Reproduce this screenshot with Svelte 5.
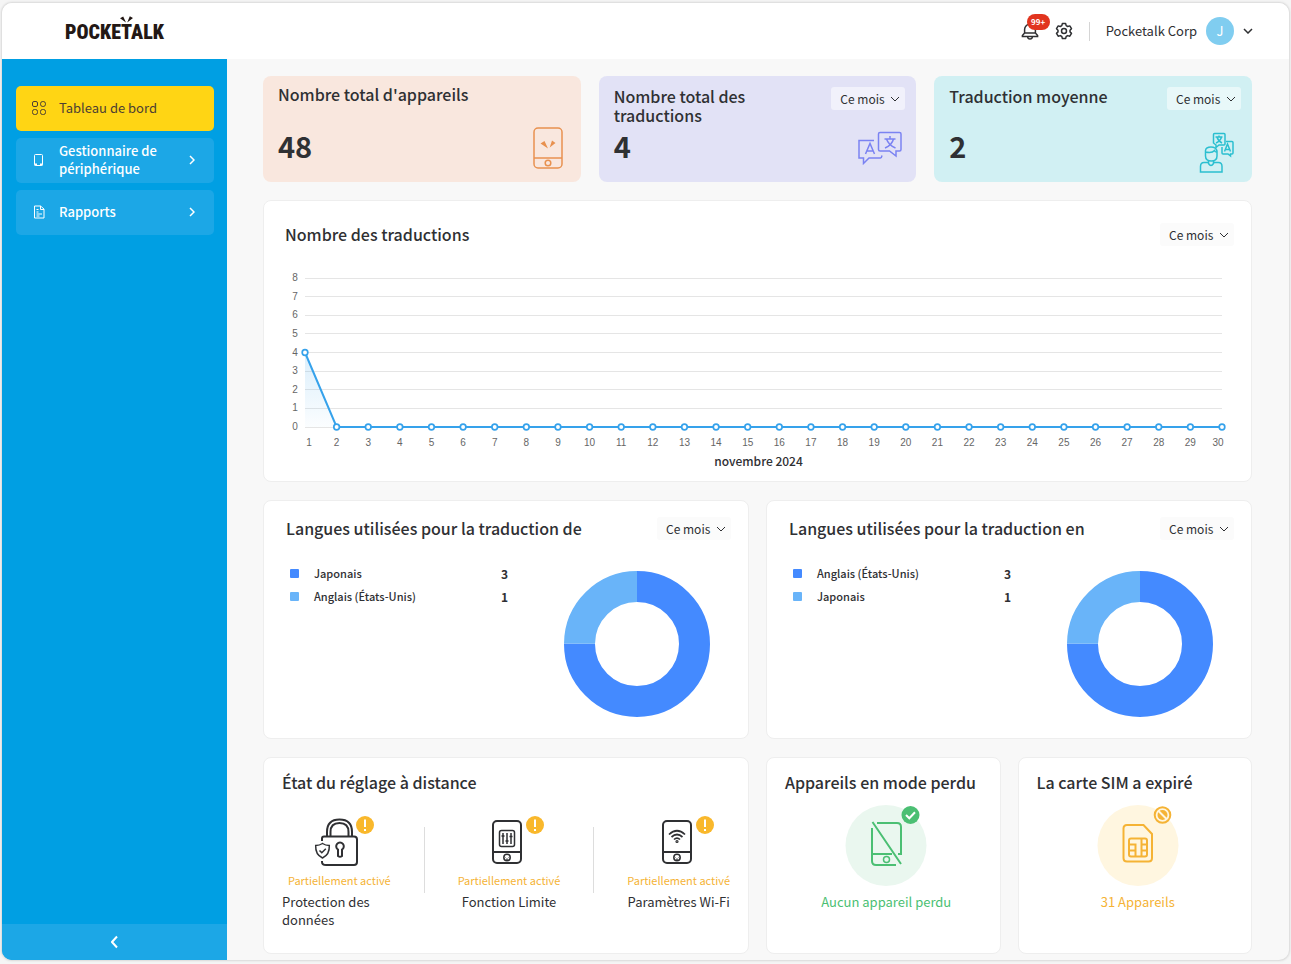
<script>
    const days = Array.from({ length: 30 }, (_, i) => i + 1);
    const counts = days.map((day) => (day === 1 ? 4 : 0));
    const ticks = [8, 7, 6, 5, 4, 3, 2, 1, 0];

    const languageCards = [
        {
            id: "from",
            title: "Langues utilisées pour la traduction de",
            rows: [
                { name: "Japonais", count: 3, color: "#448aff" },
                { name: "Anglais (États-Unis)", count: 1, color: "#69b4f9" },
            ],
        },
        {
            id: "to",
            title: "Langues utilisées pour la traduction en",
            rows: [
                { name: "Anglais (États-Unis)", count: 3, color: "#448aff" },
                { name: "Japonais", count: 1, color: "#69b4f9" },
            ],
        },
    ];

    const settings = [
        { icon: "lock", name: "Protection des données" },
        { icon: "limit", name: "Fonction Limite" },
        { icon: "wifi", name: "Paramètres Wi-Fi" },
    ];

    // The chart follows the width of its card
    let chartWidth = $state(947);
    const left = 20;
    const top = 10;
    const plotHeight = 149;
    let right = $derived(chartWidth - 10);

    const y = (value) => top + plotHeight - (value * plotHeight) / 8;
    let points = $derived(
        counts.map((count, i) => ({
            x: left + (i * (right - left)) / (days.length - 1),
            y: y(count),
        })),
    );
    let line = $derived(points.map((p) => `${p.x},${p.y}`).join(" "));

    // First and last labels are pulled inside the plot
    function labelX(i) {
        if (i === 0) return points[i].x + 4;
        if (i === days.length - 1) return points[i].x - 4;
        return points[i].x;
    }

    function slices(rows) {
        const length = 2 * Math.PI * 57.5;
        const total = rows.reduce((sum, row) => sum + row.count, 0);
        let offset = 0;
        return rows.map((row) => {
            const part = (row.count / total) * length;
            const slice = { color: row.color, dash: `${part} ${length - part}`, offset: -offset };
            offset += part;
            return slice;
        });
    }
</script>

{#snippet chevron()}
    <svg class="chevron" width="10" height="6" viewBox="0 0 10 6" aria-hidden="true">
        <path d="M1 1l4 4 4-4" />
    </svg>
{/snippet}

{#snippet period(id, label)}
    <span class="period">
        <select {id} aria-label={label}>
            <option>Ce mois</option>
        </select>
        {@render chevron()}
    </span>
{/snippet}

{#snippet phone()}
    <rect x="19" y="5" width="28" height="42" rx="4" />
    <path d="M19 36h28" />
    <circle cx="33" cy="41.500" r="3.200" stroke-width="1.500" />
    <path d="M31.500 41.200v.4M34.500 41.200v.4M32 43q1 .6 2 0" stroke-width="1" />
{/snippet}

<div class="window">
    <header class="topbar">
        <a class="logo" href="#home" aria-label="POCKETALK">
            <span>POCKETALK</span>
            <svg width="13" height="7" viewBox="0 0 13 7" aria-hidden="true">
                <path d="M0 2.200L3.200.4 6 6.600zM9.800.200L13 2 7.200 6.600z" />
            </svg>
        </a>
        <div class="tools">
            <button class="bell" aria-label="Notifications">
                <svg width="18" height="18" viewBox="0 0 18 18" aria-hidden="true">
                    <path d="M3.600 11V7.500a5.400 5.400 0 0 1 10.800 0V11l2.200 2.600v1H1.400v-1zM3.600 11h10.800M6.600 14.800q.2 2.200 2.400 2.200t2.400-2.200" />
                </svg>
                <span class="count">99+</span>
            </button>
            <button aria-label="Paramètres">
                <svg width="18" height="18" viewBox="0 0 18 18" aria-hidden="true">
                    <path d="M7.400 1.500h3.200l.6 2.100 1.500.9 2.100-.6 1.700 2.800-1.500 1.500v1.700l1.500 1.500-1.700 2.800-2.100-.6-1.500.9-.6 2.100H7.400l-.6-2.100-1.500-.9-2.100.6-1.700-2.800L3 9.900V8.200L1.500 6.700l1.700-2.800 2.100.6 1.500-.9z" stroke-linejoin="round" />
                    <circle cx="9" cy="9" r="2.500" />
                </svg>
            </button>
            <span class="separator"></span>
            <button class="account">
                <span>Pocketalk Corp</span>
                <span class="avatar">J</span>
                {@render chevron()}
            </button>
        </div>
    </header>

    <div class="body">
        <aside>
            <nav>
                <a class="active" href="#dashboard">
                    <svg width="16" height="16" viewBox="0 0 16 16" aria-hidden="true">
                        <rect x="1.500" y="1.500" width="5" height="5" rx="1.500" />
                        <rect x="9.500" y="1.500" width="5" height="5" rx="2.300" />
                        <rect x="1.500" y="9.500" width="5" height="5" rx="2" />
                        <rect x="9.500" y="9.500" width="5" height="5" rx="2" />
                    </svg>
                    <span>Tableau de bord</span>
                </a>
                <a href="#devices">
                    <svg width="16" height="16" viewBox="0 0 16 16" aria-hidden="true">
                        <rect x="3.500" y="2.500" width="8" height="11" rx="1" />
                        <path d="M3.500 12.500H6M9 12.500h2.500" stroke-width="2" />
                    </svg>
                    <span>Gestionnaire de périphérique</span>
                    <svg class="arrow" width="6" height="10" viewBox="0 0 6 10" aria-hidden="true">
                        <path d="M1 1l4 4-4 4" />
                    </svg>
                </a>
                <a href="#reports">
                    <svg width="16" height="16" viewBox="0 0 16 16" aria-hidden="true">
                        <path d="M3.500 2h6L13 5v9H3.500zM9.500 2v3.500H13M5.500 5.500h2M5.500 8h2M5.500 10h5.500M5.500 12h3" />
                    </svg>
                    <span>Rapports</span>
                    <svg class="arrow" width="6" height="10" viewBox="0 0 6 10" aria-hidden="true">
                        <path d="M1 1l4 4-4 4" />
                    </svg>
                </a>
            </nav>
            <button class="collapse" aria-label="Réduire le menu">
                <svg width="8" height="14" viewBox="0 0 8 14" aria-hidden="true">
                    <path d="M6 1.500L1 7l5 5.500" />
                </svg>
            </button>
        </aside>

        <main>
            <div class="stats">
                <section class="stat devices">
                    <h2>Nombre total d'appareils</h2>
                    <div class="figure">
                        <strong>48</strong>
                        <svg width="30" height="42" viewBox="0 0 30 42" aria-hidden="true">
                            <rect x="1" y="1" width="28" height="40" rx="4" />
                            <path d="M1 31h28" />
                            <circle cx="15" cy="36" r="2.800" />
                            <path class="solid" d="M7.500 16.500l4-2.500L15 21.500zM19 13.500l3.500 2.500-5.800 4.500z" />
                        </svg>
                    </div>
                </section>
                <section class="stat translations">
                    <div class="head">
                        <h2>Nombre total des traductions</h2>
                        {@render period("total", "Période du total")}
                    </div>
                    <div class="figure">
                        <strong>4</strong>
                        <svg width="44" height="42" viewBox="0 0 44 42" aria-hidden="true">
                            <path d="M22 5.500h19.500q1.500 0 1.500 1.500v15.500q0 1.500-1.500 1.500H38v5L31.500 24H22q-1.500 0-1.500-1.500V7q0-1.500 1.500-1.500z" />
                            <path d="M16 13.500H1V31h4.500v5.500L11 31h11.500q1 0 1.500-2.500" />
                            <path d="M7.500 27L12 16.500 16.500 27M9 24h6" />
                            <path d="M26.500 12h11M32 9v3M35.500 12q-1.500 6-8.500 9M28.500 12q2 6 9 9" />
                        </svg>
                    </div>
                </section>
                <section class="stat average">
                    <div class="head">
                        <h2>Traduction moyenne</h2>
                        {@render period("average", "Période de la moyenne")}
                    </div>
                    <div class="figure">
                        <strong>2</strong>
                        <svg width="34" height="42" viewBox="0 0 34 42" aria-hidden="true">
                            <path d="M16 18l-2.500-2V7.500q0-1 1-1h9.500q1 0 1 1V17q0 1-1 1h-5L16 20.500z" />
                            <path d="M26 14.500h6q1 0 1 1V26q0 1-1 1h-1.500v2L28 27h-5q-1 0-1-1v-6" />
                            <path d="M15.500 10h7M19 8.500V10M21.500 10q-1 4-5.500 6M17 10q1 4 5 6M24.500 24.500l3-7.500 3 7.500M25.500 22.500h4" />
                            <path d="M5.500 25q6.500 1.500 9-1.500 1 2 2.500 1.500M5.500 25v-1.500q.5-3.500 5.500-3.500t6 4V29q0 5-5.700 5T5.500 29z" />
                            <path d="M8.500 34v2.500q2.500 4 5 0V34M8.500 35.500H4q-3.500 0-3.500 4v5.500h21.500v-5.500q0-4-3.500-4h-5" />
                        </svg>
                    </div>
                </section>
            </div>

            <section class="panel">
                <div class="head chart-head">
                    <h2>Nombre des traductions</h2>
                    {@render period("chart", "Période du graphique")}
                </div>
                <figure bind:clientWidth={chartWidth}>
                    <svg width={chartWidth} height="183" role="img" aria-label="Nombre des traductions par jour">
                        <defs>
                            <linearGradient id="fade" x1="0" y1="0" x2="0" y2="1">
                                <stop offset="0" stop-color="#36a2eb" stop-opacity="0.180" />
                                <stop offset="1" stop-color="#36a2eb" stop-opacity="0.020" />
                            </linearGradient>
                        </defs>
                        {#each ticks as tick}
                            <line x1={left} x2={right} y1={Math.floor(y(tick)) + 0.5} y2={Math.floor(y(tick)) + 0.5} />
                            <text x="10" y={y(tick) + 3}>{tick}</text>
                        {/each}
                        <polygon points="{left},{y(0)} {line} {right},{y(0)}" fill="url(#fade)" />
                        <polyline points={line} />
                        {#each points as point, i}
                            <circle cx={point.x} cy={point.y} r="2.800" />
                            <text x={labelX(i)} y="178">{days[i]}</text>
                        {/each}
                    </svg>
                    <figcaption>novembre 2024</figcaption>
                </figure>
            </section>

            <div class="halves">
                {#each languageCards as card}
                    <section class="panel">
                        <div class="head">
                            <h2>{card.title}</h2>
                            {@render period(card.id, "Période : " + card.title)}
                        </div>
                        <div class="languages">
                            <ul>
                                {#each card.rows as row}
                                    <li>
                                        <span class="swatch" style="background: {row.color}"></span>
                                        <span class="name">{row.name}</span>
                                        <b>{row.count}</b>
                                    </li>
                                {/each}
                            </ul>
                            <svg width="146" height="146" viewBox="0 0 146 146" aria-hidden="true">
                                {#each slices(card.rows) as slice}
                                    <circle
                                        cx="73"
                                        cy="73"
                                        r="57.500"
                                        stroke={slice.color}
                                        stroke-dasharray={slice.dash}
                                        stroke-dashoffset={slice.offset}
                                        transform="rotate(-90 73 73)"
                                    />
                                {/each}
                            </svg>
                        </div>
                    </section>
                {/each}
            </div>

            <div class="halves">
                <section class="panel status">
                    <h2>État du réglage à distance</h2>
                    <div class="settings">
                        {#each settings as setting}
                            <div class="setting">
                                <svg width="70" height="52" viewBox="0 0 70 52" aria-hidden="true">
                                    {#if setting.icon === "lock"}
                                        <path d="M18 25v-2.500q0-2 2-2h30q3 0 3 3V46q0 3-3 3H22q-4 0-4-3v-1" />
                                        <path d="M23 20.500V16q0-12.500 12.500-12.500T48 16v4.500M26.500 20.500V16q0-9 9-9t9 9v4.500" />
                                        <path d="M34 40v-6.500a3.800 3.800 0 1 1 4 0V40q-2 1.500-4 0z" />
                                        <path d="M18.500 27.500q3 2 6.800 2 .5 9-6.800 12.500-7.300-3.500-6.800-12.500 3.800 0 6.800-2zM15.500 34.500l2.300 2.300 4-4" stroke-width="1.500" />
                                    {:else}
                                        {@render phone()}
                                        {#if setting.icon === "limit"}
                                            <rect x="25.500" y="14.500" width="15" height="16" rx="2" stroke-width="1.500" />
                                            <path d="M29 17v11M33 17v11M37 17v11M27.500 20h3M31.500 25h3M35.500 20.500h3" stroke-width="1.500" />
                                        {:else}
                                            <path d="M25 18.500q8-7.500 16 0M27.500 21q5.500-5 11 0M30 23.500q3-2.800 6 0" stroke-width="1.700" />
                                            <circle cx="33" cy="25.500" r=".6" />
                                        {/if}
                                    {/if}
                                    <circle class="badge" cx="61" cy="9" r="9" />
                                    <path class="mark" d="M61 3.500v7.500M61 13v2" />
                                </svg>
                                <span class="state">Partiellement activé</span>
                                <span>{setting.name}</span>
                            </div>
                        {/each}
                    </div>
                </section>

                <div class="pair">
                    <section class="panel status lost">
                        <h2>Appareils en mode perdu</h2>
                        <svg width="82" height="81" viewBox="0 0 82 81" aria-hidden="true">
                            <circle class="disc" cx="41" cy="40.500" r="40.500" />
                            <path d="M32 18h20q4 0 4 4v28M27 23v33q0 4 4 4h20M27 49h20M53 49h3M27.500 17L56 59" />
                            <circle cx="41.500" cy="54.500" r="3" stroke-width="1.500" />
                            <circle class="badge" cx="65.500" cy="10" r="9" />
                            <path class="mark" d="M61 10l3.300 3.300 5.700-6" />
                        </svg>
                        <a href="#lost">Aucun appareil perdu</a>
                    </section>
                    <section class="panel status sim">
                        <h2>La carte SIM a expiré</h2>
                        <svg width="82" height="81" viewBox="0 0 82 81" aria-hidden="true">
                            <circle class="disc" cx="41" cy="40.500" r="40.500" />
                            <path d="M30 20h16.500L55 29v24q0 3.500-3.500 3.500H30q-3.500 0-3.500-3.500V23.500Q26.500 20 30 20z" />
                            <path d="M34 33.500h14q2 0 2 2v14q0 2-2 2H34q-2 0-2-2v-14q0-2 2-2zM32 39.500h6.500v12M44.500 33.500v18M32 45.500h6.500M44.500 39.500H50M44.500 45.500H50" />
                            <circle class="ring" cx="65.500" cy="10" r="7.800" />
                            <circle class="dot" cx="65.500" cy="10" r="5" />
                            <path class="slash" d="M61.500 6l8 8" />
                        </svg>
                        <a href="#sim">31 Appareils</a>
                    </section>
                </div>
            </div>
        </main>
    </div>
</div>

<style>
    :global(body) {
        background: #f5f5f5;
    }

    .window {
        margin: 3px 2px 4px;
        background: #f8f8f8;
        border-radius: 10px;
        overflow: hidden;
        box-shadow: 0 0 2px 1px #d8d8d8;
        color: #2f3033;
        font: 13px/18px "Noto Sans CJK JP", "Noto Sans", sans-serif;
    }

    h2 {
        margin: 0;
        font-size: 16px;
        line-height: 19px;
        font-weight: 500;
    }

    button {
        padding: 0;
        border: 0;
        background: none;
        color: inherit;
        font: inherit;
        cursor: pointer;
    }

    a {
        color: inherit;
        text-decoration: none;
    }

    svg {
        display: block;
        flex: none;
        fill: none;
        stroke: currentColor;
    }

    /* Top bar */
    .topbar {
        display: flex;
        align-items: center;
        justify-content: space-between;
        height: 56px;
        padding: 0 36px 0 63px;
        background: #fff;
    }

    .logo {
        position: relative;
        padding-top: 2px;
        color: #231815;
        font: 900 20px/24px "Roboto Condensed", "Open Sans Condensed", Lato, sans-serif;
    }

    .logo svg {
        position: absolute;
        left: 55px;
        top: -2px;
        fill: currentColor;
        stroke: none;
    }

    .tools,
    .account {
        display: flex;
        align-items: center;
    }

    .tools {
        gap: 16px;
    }

    .tools > button > svg {
        stroke-width: 1.5;
    }

    .bell {
        position: relative;
    }

    .count {
        position: absolute;
        left: 6px;
        top: -8px;
        width: 23px;
        border-radius: 8px;
        background: #e1341e;
        color: #fff;
        font-size: 8px;
        line-height: 16px;
        font-weight: 700;
    }

    .separator {
        width: 1px;
        height: 19px;
        background: #d5d5d5;
    }

    .account {
        gap: 9px;
    }

    .avatar {
        width: 28px;
        border-radius: 50%;
        background: #80cdf0;
        color: #fff;
        line-height: 28px;
    }

    /* Sidebar */
    .body {
        display: flex;
    }

    aside {
        display: flex;
        flex: none;
        flex-direction: column;
        width: 225px;
        background: #009fe3;
        color: #fff;
    }

    nav {
        display: flex;
        flex: 1;
        flex-direction: column;
        gap: 7px;
        padding: 27px 13px 0 14px;
    }

    nav a {
        display: flex;
        align-items: center;
        gap: 12px;
        min-height: 43px;
        padding: 0 19px 2px 15px;
        border-radius: 5px;
        background: #1ca7e6;
        font-weight: 500;
    }

    nav a span {
        flex: 1;
    }

    nav .active {
        background: #ffd514;
        color: #4d3f33;
        font-weight: 400;
    }

    .arrow {
        stroke-width: 1.5;
    }

    .collapse {
        display: grid;
        place-items: center;
        height: 36px;
        background: #1ca7e6;
    }

    .collapse svg {
        stroke-width: 2;
    }

    /* Content */
    main {
        display: flex;
        flex: 1;
        flex-direction: column;
        gap: 18px;
        min-width: 0;
        padding: 17px 37px 6px 36px;
    }

    .stats {
        display: grid;
        grid-template-columns: repeat(3, 1fr);
        gap: 18px;
    }

    .stat {
        display: flex;
        flex-direction: column;
        justify-content: space-between;
        min-height: 106px;
        box-sizing: border-box;
        padding: 11px 11px 13px 15px;
        border-radius: 8px;
    }

    .head {
        display: flex;
        justify-content: space-between;
        align-items: center;
        gap: 16px;
    }

    .stat .head {
        align-items: flex-start;
    }

    .figure {
        display: flex;
        align-items: flex-start;
        justify-content: space-between;
        height: 42px;
    }

    .figure strong {
        font-size: 29px;
        line-height: 36px;
    }

    .figure svg {
        stroke-width: 1.5;
    }

    .devices {
        padding-top: 9px;
        background: #f9e7de;
    }

    .devices .figure {
        padding-right: 7px;
    }

    .devices svg {
        color: #e8914f;
    }

    .translations {
        background: #e2e2f6;
    }

    .translations .figure {
        padding-right: 3px;
    }

    .translations .figure svg {
        color: #7b83f2;
    }

    .average {
        background: #d1f0f3;
    }

    .average .figure {
        padding-right: 7px;
    }

    .average .figure svg {
        overflow: visible;
        color: #2bbfd0;
    }

    .solid {
        fill: currentColor;
        stroke: none;
    }

    /* Period picker, the chevron lies over the select */
    .period {
        position: relative;
        flex: none;
    }

    .period select {
        display: block;
        appearance: none;
        width: 74px;
        height: 23px;
        padding: 0 0 0 9px;
        border: 0;
        border-radius: 3px;
        background: #fbfbfb;
        color: inherit;
        font: inherit;
        font-size: 12px;
    }

    .stat .period select {
        background: rgba(255, 255, 255, 0.5);
    }

    .period .chevron {
        position: absolute;
        right: 5px;
        top: 9px;
        pointer-events: none;
    }

    .panel {
        box-sizing: border-box;
        border: 1px solid #eee;
        border-radius: 8px;
        background: #fff;
    }

    .panel > .head {
        padding: 16px 17px 0 22px;
    }

    .panel > .chart-head {
        padding: 22px 17px 0 21px;
    }

    figure {
        margin: 22px 19px 10px 21px;
    }

    figure line {
        stroke: #e5e5e5;
    }

    figure polygon {
        stroke: none;
    }

    figure polyline {
        stroke: #36a2eb;
        stroke-width: 2;
    }

    figure circle {
        fill: #fff;
        stroke: #36a2eb;
        stroke-width: 1.7;
    }

    figure text {
        fill: #666;
        stroke: none;
        font: 10px "Liberation Sans", sans-serif;
        text-anchor: middle;
    }

    figcaption {
        font-size: 12px;
        line-height: 20px;
        font-weight: 500;
        text-align: center;
    }

    .halves,
    .pair {
        display: grid;
        grid-template-columns: repeat(2, minmax(0, 1fr));
        gap: 17px;
    }

    /* Languages */
    .languages {
        display: flex;
        justify-content: space-between;
        padding: 22px 38px 21px 26px;
    }

    .languages ul {
        width: 218px;
        margin: 0;
        padding: 0;
        list-style: none;
    }

    .languages li {
        display: flex;
        align-items: center;
        gap: 15px;
        line-height: 23px;
        font-size: 11px;
        font-weight: 500;
    }

    .languages b {
        font-size: 12px;
    }

    .languages svg {
        margin-top: 9px;
        stroke-width: 31;
    }

    .swatch {
        width: 9px;
        height: 9px;
        border-radius: 1px;
    }

    .name {
        flex: 1;
    }

    /* Device status */
    .status {
        padding: 13px 12px 24px 18px;
    }

    .status h2 {
        line-height: 23px;
    }

    .settings {
        display: flex;
        gap: 55px;
        margin-top: 22px;
    }

    .setting {
        display: flex;
        flex: 1;
        flex-direction: column;
        align-items: center;
        position: relative;
    }

    .setting + .setting::before {
        content: "";
        position: absolute;
        left: -28px;
        top: 11px;
        height: 66px;
        border-left: 1px solid #ddd;
    }

    .setting svg {
        stroke-width: 2;
    }

    .state {
        margin: 4px 0 5px;
        color: #f5b335;
        font-size: 11px;
        line-height: 16px;
        white-space: nowrap;
    }

    .badge {
        fill: #f9b82c;
        stroke: none;
    }

    .mark {
        stroke: #fff;
        stroke-width: 2;
    }

    .lost,
    .sim {
        text-align: center;
    }

    .lost h2,
    .sim h2 {
        color: #2f3033;
        text-align: left;
        white-space: nowrap;
    }

    .lost svg,
    .sim svg {
        margin: 11px auto 7px;
        stroke-width: 2;
    }

    .lost {
        color: #4bbf73;
    }

    .lost .badge {
        fill: currentColor;
    }

    .sim {
        color: #f5b335;
    }

    .disc {
        fill: #eaf7ef;
        stroke: none;
    }

    .sim .disc {
        fill: #fff6e0;
    }

    .ring {
        fill: #fff6e0;
    }

    .dot {
        fill: currentColor;
        stroke: none;
    }

    .slash {
        stroke: #fff6e0;
    }
</style>
